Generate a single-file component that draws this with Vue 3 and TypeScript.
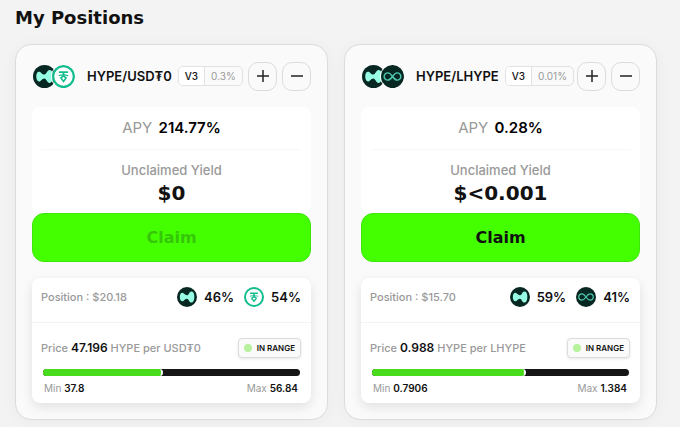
<script setup lang="ts">
type Token = 'hype' | 'usdt' | 'lhype'

interface Share {
  token: Token
  percent: number
}

interface Position {
  base: string
  quote: string
  version: string
  fee: string
  apy: string
  unclaimed: string
  claimable: boolean
  value: string
  shares: Share[]
  price: string
  min: string
  max: string
  progress: number
}

const positions: Position[] = [
  {
    base: 'HYPE',
    quote: 'USD₮0',
    version: 'V3',
    fee: '0.3%',
    apy: '214.77%',
    unclaimed: '$0',
    claimable: false,
    value: '$20.18',
    shares: [
      { token: 'hype', percent: 46 },
      { token: 'usdt', percent: 54 },
    ],
    price: '47.196',
    min: '37.8',
    max: '56.84',
    progress: 46,
  },
  {
    base: 'HYPE',
    quote: 'LHYPE',
    version: 'V3',
    fee: '0.01%',
    apy: '0.28%',
    unclaimed: '$<0.001',
    claimable: true,
    value: '$15.70',
    shares: [
      { token: 'hype', percent: 59 },
      { token: 'lhype', percent: 41 },
    ],
    price: '0.988',
    min: '0.7906',
    max: '1.384',
    progress: 59,
  },
]
</script>

<template>
  <main class="page">
    <svg class="sprite" aria-hidden="true">
      <symbol id="hype" viewBox="0 0 24 24">
        <circle cx="12" cy="12" r="12" fill="#072723" />
        <path
          d="M3.400 12C3.400 9 4.500 7 6.300 7c2.300 0 3 3 5.500 3 2.600 0 2.600-4.700 5.600-4.700 2.400 0 3.400 3 3.400 6.500 0 3.900-1.100 6.900-3.400 6.900-3 0-3.100-4.700-5.700-4.700-2.500 0-3.100 3.200-5.400 3.200C4.500 17.200 3.400 15 3.400 12Z"
          fill="#97fce4"
        />
      </symbol>
      <symbol id="usdt" viewBox="0 0 24 24">
        <circle cx="12" cy="12" r="10.800" fill="#fff" stroke="#13bd8e" stroke-width="2.400" />
        <path d="M7.200 7.500h9.600M12 7.500v3.500" fill="none" stroke="#13bd8e" stroke-width="1.900" />
        <path d="M7 11.100c2.500-.8 7.500-.8 10 0" fill="none" stroke="#13bd8e" stroke-width="1.100" />
        <path d="M12 11.300l2.700 2.200-2.700 3.700-2.700-3.700Z" fill="none" stroke="#13bd8e" stroke-width="1.700" />
      </symbol>
      <symbol id="lhype" viewBox="0 0 24 24">
        <circle cx="12" cy="12" r="12" fill="#072723" />
        <path
          d="M12 12c-1.600-2.400-3-3.800-5-3.800A3.700 3.700 0 0 0 3.300 12 3.700 3.700 0 0 0 7 15.800c2 0 3.400-1.400 5-3.800s3-3.800 5-3.800a3.700 3.700 0 0 1 3.700 3.800 3.700 3.700 0 0 1-3.700 3.800c-2 0-3.400-1.400-5-3.800Z"
          fill="none"
          stroke="#4fc7ac"
          stroke-width="1.500"
        />
      </symbol>
    </svg>

    <h1 class="heading">My Positions</h1>

    <div class="grid">
      <article v-for="p in positions" :key="p.quote" class="card">
        <header class="top">
          <span class="pair-icons">
            <svg v-for="s in p.shares" :key="s.token" class="coin" aria-hidden="true">
              <use :href="'#' + s.token" />
            </svg>
          </span>
          <h2 class="pair">{{ p.base }}/{{ p.quote }}</h2>
          <span class="badge">
            <span class="version">{{ p.version }}</span>
            <span class="fee">{{ p.fee }}</span>
          </span>
          <span class="actions">
            <button type="button" class="square" aria-label="Add liquidity">
              <svg class="glyph" viewBox="0 0 14 14" aria-hidden="true"><path d="M1 7h12M7 1v12" /></svg>
            </button>
            <button type="button" class="square" aria-label="Remove liquidity">
              <svg class="glyph" viewBox="0 0 14 14" aria-hidden="true"><path d="M1 7h12" /></svg>
            </button>
          </span>
        </header>

        <section class="yield">
          <p class="apy">APY <strong>{{ p.apy }}</strong></p>
          <div class="unclaimed">
            <p class="label">Unclaimed Yield</p>
            <p class="amount">{{ p.unclaimed }}</p>
          </div>
        </section>
        <button type="button" class="claim" :disabled="!p.claimable">Claim</button>

        <section class="details">
          <div class="holdings">
            <span class="value">Position : {{ p.value }}</span>
            <span v-for="s in p.shares" :key="s.token" class="share">
              <svg class="mini" aria-hidden="true"><use :href="'#' + s.token" /></svg>
              {{ s.percent }}%
            </span>
          </div>
          <div class="range">
            <div class="price-row">
              <p class="price">Price <strong>{{ p.price }}</strong> {{ p.base }} per {{ p.quote }}</p>
              <span class="status"><i class="dot"></i>IN RANGE</span>
            </div>
            <div class="track">
              <div class="fill" :style="{ width: p.progress + '%' }"></div>
            </div>
            <div class="limits">
              <span>Min <strong>{{ p.min }}</strong></span>
              <span>Max <strong>{{ p.max }}</strong></span>
            </div>
          </div>
        </section>
      </article>
    </div>
  </main>
</template>

<style>
body {
  margin: 0;
  background: #f3f3f3;
}
</style>

<style scoped>
.page {
  padding: 4px 23px 8px 15px;
  color: #111;
  font-family: Inter, "Liberation Sans", sans-serif;
  font-size: 13px;
}

.sprite {
  position: absolute;
  width: 0;
  height: 0;
}

h1,
h2,
p {
  margin: 0;
}

button {
  font: inherit;
  color: inherit;
  cursor: pointer;
}

strong {
  font-weight: 600;
  color: #111;
}

.heading,
.amount,
.claim {
  font-family: "DejaVu Sans", sans-serif;
  font-weight: 700;
}

.heading {
  font-size: 18px;
  line-height: 28px;
}

.grid {
  display: grid;
  grid-template-columns: repeat(2, minmax(0, 1fr));
  gap: 16px;
  margin-top: 12px;
}

.card {
  padding: 16px;
  border: 1px solid #dcdcdc;
  border-radius: 16px;
  background: #fafafa;
  box-shadow: 0 2px 16px rgba(0, 0, 0, 0.04);
}

.top {
  display: flex;
  align-items: center;
  height: 30px;
}

.pair-icons {
  display: flex;
  flex: none;
  margin-left: 1px;
}

.coin {
  width: 23px;
  height: 23px;
}

.coin + .coin {
  margin-left: -4px;
  border-radius: 50%;
  box-shadow: 0 0 0 1px #fafafa;
}

.pair {
  margin-left: 12px;
  font-size: 13px;
  line-height: 20px;
  font-weight: 600;
  white-space: nowrap;
}

.badge {
  display: flex;
  flex: none;
  margin-left: 6px;
  border: 1px solid #e2e2e2;
  border-radius: 5px;
  overflow: hidden;
  font-size: 10px;
  line-height: 18px;
}

.version {
  padding: 0 6px;
  background: #fff;
  border-right: 1px solid #e2e2e2;
  font-weight: 500;
}

.fee {
  padding: 0 6px;
  color: #999;
}

.actions {
  display: flex;
  flex: none;
  gap: 5px;
  margin-left: auto;
}

.square {
  display: grid;
  place-items: center;
  width: 29px;
  height: 29px;
  padding: 0;
  border: 1px solid #dcdcdc;
  border-radius: 10px;
  background: #fafafa;
}

.glyph {
  width: 14px;
  height: 14px;
  fill: none;
  stroke: #222;
  stroke-width: 1.5;
}

.yield {
  margin-top: 16px;
  padding: 0 10px;
  border-radius: 8px;
  background: #fff;
  text-align: center;
}

.apy {
  border-bottom: 1px solid #f8f8f8;
  font-size: 15px;
  line-height: 42px;
  color: #999;
}

.apy strong {
  margin-left: 2px;
  color: #000;
}

.unclaimed {
  padding: 10px 0 7px;
}

.label {
  line-height: 20px;
  font-weight: 500;
  color: #999;
}

.amount {
  font-size: 20px;
  line-height: 26px;
}

.claim {
  display: block;
  width: 100%;
  height: 49px;
  border: 1px solid #3ee80a;
  border-radius: 12px;
  background: #44ff00;
  font-size: 16px;
  color: #111;
}

.claim:disabled {
  color: #36c60a;
  cursor: default;
}

.details {
  margin-top: 16px;
  border-radius: 8px;
  background: #fff;
  box-shadow: 0 4px 12px rgba(0, 0, 0, 0.1);
}

.holdings {
  display: flex;
  align-items: center;
  gap: 10px;
  padding: 0 10px 6px 9px;
  border-bottom: 1px solid #f3f3f3;
}

.value {
  flex: 1;
  font-size: 11px;
  font-weight: 500;
  color: #999;
}

.share {
  display: flex;
  align-items: center;
  gap: 7px;
  height: 38px;
  font-weight: 600;
}

.mini {
  width: 20px;
  height: 20px;
}

.range {
  padding: 15px 10px 8px 9px;
}

.price-row {
  display: flex;
  align-items: center;
  justify-content: space-between;
}

.price {
  font-size: 11px;
  line-height: 20px;
  font-weight: 500;
  color: #999;
  white-space: nowrap;
}

.price strong {
  font-size: 12px;
}

.status {
  display: flex;
  align-items: center;
  gap: 5px;
  padding: 0 5px;
  border: 1px solid #dcdcdc;
  border-radius: 4px;
  background: #fafafa;
  box-shadow: 0 1px 3px rgba(0, 0, 0, 0.1);
  font-size: 8px;
  line-height: 18px;
  font-weight: 600;
}

.dot {
  width: 8px;
  height: 8px;
  border-radius: 50%;
  background: #b5f29b;
}

.track {
  height: 7px;
  margin: 11px 1px 0 2px;
  border-radius: 4px;
  background: #161616;
  overflow: hidden;
}

.fill {
  height: 7px;
  border-right: 2px solid #fff;
  border-radius: 0 4px 4px 0;
  background: #48dc1c;
}

.limits {
  display: flex;
  justify-content: space-between;
  margin: 5px 3px 0;
  font-size: 10px;
  line-height: 14px;
  color: #999;
}
</style>
